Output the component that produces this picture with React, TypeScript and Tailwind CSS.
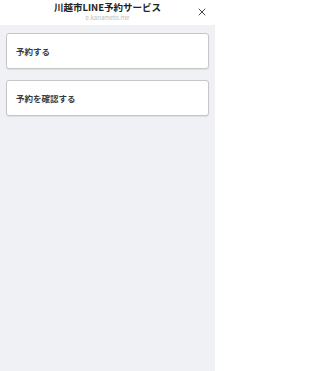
import { X } from "lucide-react";

const items = ["予約する", "予約を確認する"];

export default function App() {
  return (
    <div
      className="w-[215px] h-[371px] flex flex-col bg-[#f0f1f5]"
      style={{ fontFamily: '"Noto Sans CJK JP", "Noto Sans", sans-serif' }}
    >
      <header className="relative h-[25px] bg-white flex flex-col items-center pt-[1px]">
        <h1 className="text-[9.5px] leading-[12px] font-bold text-[#222]">川越市LINE予約サービス</h1>
        <p className="mt-[1px] text-[6px] leading-[8px] text-[#bbb]">e.kanameto.me</p>
        <button className="absolute right-[7px] top-[6px] text-[#222]">
          <X size={12} strokeWidth={1.7} />
        </button>
      </header>

      <main className="flex flex-col gap-[11px] px-[6px] pt-[8px]">
        {items.map((label) => (
          <div
            key={label}
            className="h-[36px] flex items-center px-[9px] bg-white rounded-[3px] border border-[#c6c6c6] shadow-[0_1px_1px_rgba(0,0,0,0.08)]"
          >
            <span className="text-[8.5px] font-semibold text-[#3a3a3a]">{label}</span>
          </div>
        ))}
      </main>
    </div>
  );
}
